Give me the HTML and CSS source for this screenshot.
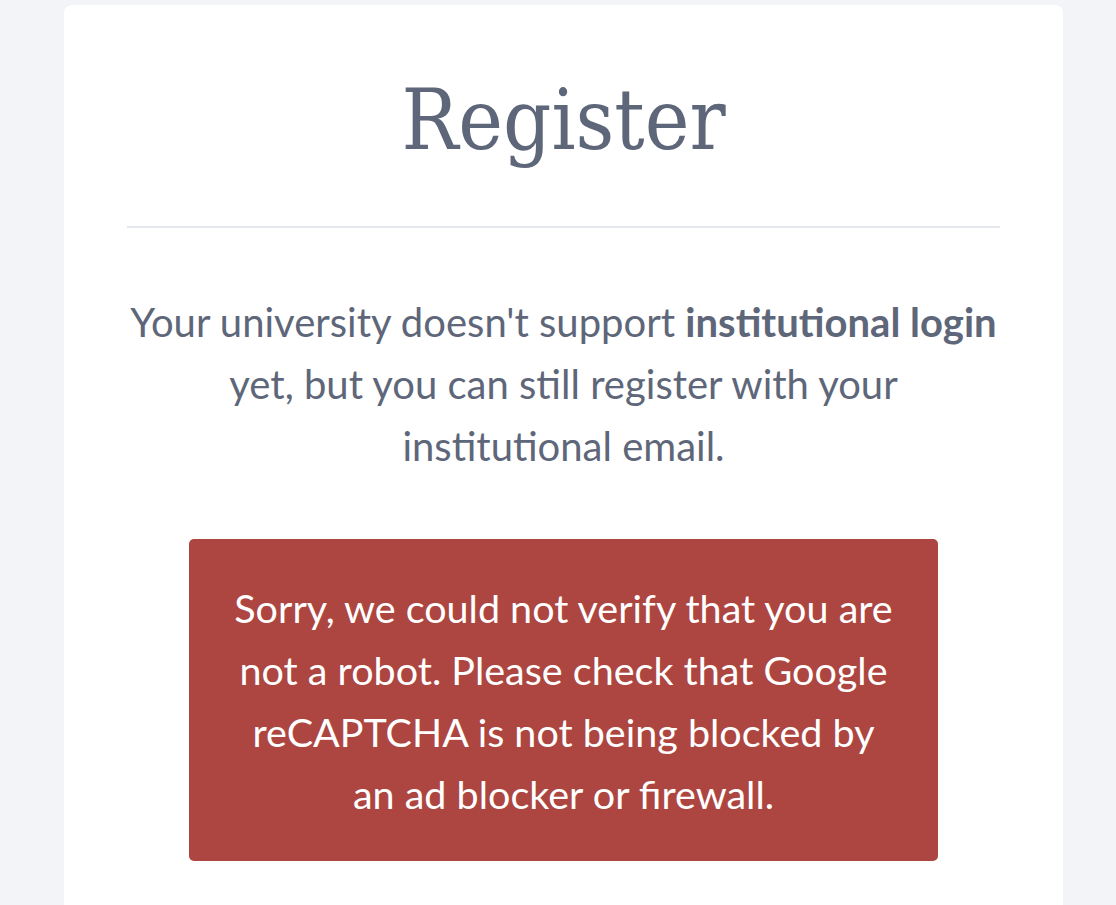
FILE: index.html
```html
<!DOCTYPE html>
<html lang="en">
<head>
<meta charset="utf-8">
<title>Register</title>
<link rel="stylesheet" href="styles.css">
</head>
<body>
<main class="page">
  <section class="card">
    <h1 class="title">Register</h1>
    <hr class="divider">
    <p class="lead">Your university doesn't support <strong>institutional login</strong> yet, but you can still register with your institutional email.</p>
    <div class="alert">Sorry, we could not verify that you are not a robot. Please check that Google reCAPTCHA is not being blocked by an ad blocker or firewall.</div>
  </section>
</main>
</body>
</html>
```
FILE: styles.css
```css
html, body {
  margin: 0;
  padding: 0;
  background: #f3f4f8;
}
.page {
  display: flex;
  justify-content: flex-start;
  padding: 5px 0 0 64px;
  height: 900px;
  overflow: hidden;
}
.card {
  width: 999px;
  box-sizing: border-box;
  background: #ffffff;
  border-radius: 8px;
  padding: 0 63px 60px;
  display: flex;
  flex-direction: column;
  align-items: center;
  min-height: 1000px;
}
.title {
  font-family: "DejaVu Serif Condensed", "DejaVu Serif", serif;
  font-stretch: condensed;
  font-weight: 400;
  font-size: 84px;
  line-height: 1;
  color: #5e6679;
  margin: 73px 0 0;
}
.divider {
  align-self: stretch;
  border: 0;
  height: 2px;
  background: #e4e7ee;
  margin: 64px 0 0;
}
.lead {
  font-family: Lato, "Open Sans", sans-serif;
  font-size: 40px;
  line-height: 62px;
  color: #5e6679;
  text-align: center;
  margin: 63px 0 0;
}
.lead strong {
  font-weight: 700;
}
.alert {
  width: 749px;
  box-sizing: border-box;
  background: #ad4640;
  color: #ffffff;
  border-radius: 5px;
  font-family: Lato, "Open Sans", sans-serif;
  font-size: 39.5px;
  line-height: 62px;
  text-align: center;
  padding: 38px 42px 36px;
  margin-top: 62px;
}
```
